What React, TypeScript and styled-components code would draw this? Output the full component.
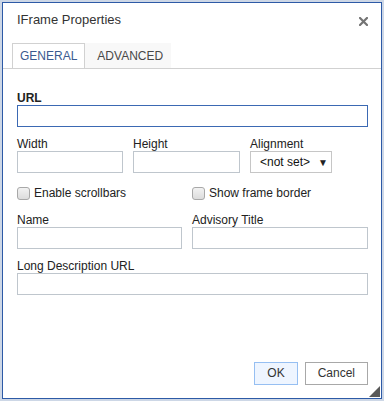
import React from "react";
import styled, { createGlobalStyle } from "styled-components";

const GlobalStyle = createGlobalStyle`
  html, body {
    margin: 0;
    background: #cdd7e6;
  }
  body {
    font-family: "Liberation Sans", Arial, sans-serif;
    color: #222;
  }
`;

const App = () => {
  return (
    <>
      <GlobalStyle />
      <Page>
        <Dialog>
          <Header>
            <Title>IFrame Properties</Title>
            <Close aria-label="Close">
              <svg width="9" height="9" viewBox="0 0 9 9">
                <path d="M1 1 L8 8 M8 1 L1 8" stroke="#747474" strokeWidth="2.2" strokeLinecap="square" />
              </svg>
            </Close>
          </Header>
          <Tabs>
            <Tab $active>GENERAL</Tab>
            <Tab>ADVANCED</Tab>
          </Tabs>
          <Body>
            <Field>
              <Label $bold>URL</Label>
              <Input $focused />
            </Field>
            <ThreeCols>
              <Field>
                <Label>Width</Label>
                <Input $width={106} />
              </Field>
              <Field>
                <Label>Height</Label>
                <Input $width={107} />
              </Field>
              <Field>
                <Label>Alignment</Label>
                <Select>
                  <span>&lt;not set&gt;</span>
                  <Arrow>▼</Arrow>
                </Select>
              </Field>
            </ThreeCols>
            <TwoCols>
              <Check>
                <Box />
                <span>Enable scrollbars</span>
              </Check>
              <Check>
                <Box />
                <span>Show frame border</span>
              </Check>
            </TwoCols>
            <TwoCols>
              <Field>
                <Label>Name</Label>
                <Input $width={165} />
              </Field>
              <Field>
                <Label>Advisory Title</Label>
                <Input />
              </Field>
            </TwoCols>
            <Field>
              <Label>Long Description URL</Label>
              <Input />
            </Field>
          </Body>
          <Footer>
            <Button $primary>OK</Button>
            <Button>Cancel</Button>
          </Footer>
          <Grip />
        </Dialog>
      </Page>
    </>
  );
};

export default App;

const Page = styled.div`
  padding: 2px;
  width: 384px;
  height: 401px;
  box-sizing: border-box;
`;

const Dialog = styled.div`
  position: relative;
  width: 380px;
  height: 397px;
  box-sizing: border-box;
  border: 1px solid #2d5aa6;
  background: #fff;
  display: flex;
  flex-direction: column;
`;

const Header = styled.div`
  padding: 9px 14px 15px;
`;

const Title = styled.div`
  font-size: 13px;
  line-height: 16px;
  color: #333;
`;

const Close = styled.div`
  position: absolute;
  top: 14px;
  right: 13px;
  width: 9px;
  height: 9px;
  display: flex;
`;

const Tabs = styled.div`
  display: flex;
  padding-left: 9px;
  height: 26px;
  box-sizing: border-box;
  border-bottom: 1px solid #d1d1d1;
`;

const Tab = styled.div<{ $active?: boolean }>`
  height: 25px;
  box-sizing: border-box;
  line-height: 24px;
  font-size: 12px;
  padding: ${(p) => (p.$active ? "0 7px" : "0 7px 0 11px")};
  border: 1px solid ${(p) => (p.$active ? "#d1d1d1" : "transparent")};
  border-bottom: none;
  background: ${(p) => (p.$active ? "#fff" : "#f8f8f8")};
  color: ${(p) => (p.$active ? "#3a5a8f" : "#484848")};
`;

const Body = styled.div`
  flex: 1;
  padding: 22px 13px 0 14px;
  display: flex;
  flex-direction: column;
  gap: 10px;
`;

const Field = styled.div`
  display: flex;
  flex-direction: column;
`;

const Label = styled.label<{ $bold?: boolean }>`
  font-size: 12px;
  line-height: 14px;
  font-weight: ${(p) => (p.$bold ? "bold" : "normal")};
  color: #222;
`;

const Input = styled.div<{ $focused?: boolean; $width?: number }>`
  height: 22px;
  box-sizing: border-box;
  width: ${(p) => (p.$width ? `${p.$width}px` : "100%")};
  border: 1px solid ${(p) => (p.$focused ? "#3b69b3" : "#bfc6cd")};
  background: #fff;
`;

const ThreeCols = styled.div`
  display: grid;
  grid-template-columns: 116px 117px 1fr;
`;

const TwoCols = styled.div`
  display: grid;
  grid-template-columns: 175px 1fr;
`;

const Select = styled.div`
  width: 82px;
  height: 22px;
  box-sizing: border-box;
  border: 1px solid #c6c6c6;
  display: flex;
  align-items: center;
  padding-left: 9px;
  font-size: 12px;
  color: #111;
  gap: 8px;
`;

const Arrow = styled.span`
  font-size: 10px;
  color: #222;
`;

const Check = styled.div`
  height: 20px;
  display: flex;
  align-items: center;
  gap: 4px;
  font-size: 12px;
  color: #222;
`;

const Box = styled.div`
  width: 13px;
  height: 13px;
  box-sizing: border-box;
  border: 1px solid #a8a8a8;
  border-radius: 3px;
  background: linear-gradient(#f2f2f2, #dcdcdc);
`;

const Footer = styled.div`
  display: flex;
  justify-content: flex-end;
  gap: 7px;
  padding: 0 13px 13px;
`;

const Button = styled.div<{ $primary?: boolean }>`
  height: 23px;
  box-sizing: border-box;
  line-height: 21px;
  padding: 0 12px;
  font-size: 12px;
  color: #333;
  border: 1px solid ${(p) => (p.$primary ? "#96bff2" : "#a8a8a8")};
  background: ${(p) => (p.$primary ? "#eef5ff" : "#fff")};
`;

const Grip = styled.div`
  position: absolute;
  right: 1px;
  bottom: 1px;
  width: 11px;
  height: 11px;
  background: #595959;
  clip-path: polygon(100% 0, 100% 100%, 0 100%);
`;
